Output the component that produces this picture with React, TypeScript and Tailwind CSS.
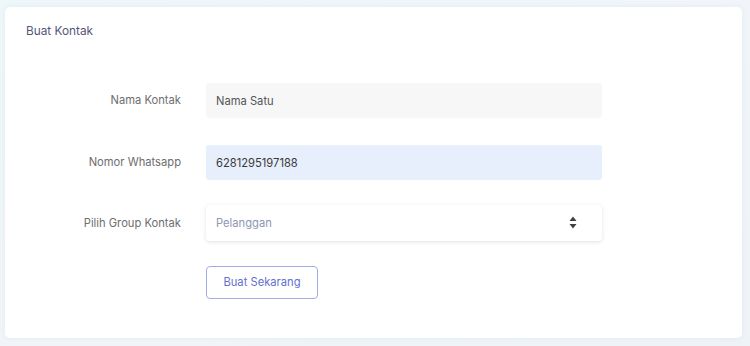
import { useState } from 'react';

const GROUPS = ['Pelanggan', 'Supplier', 'Keluarga'];

function SortIcon() {
  return (
    <svg width="8" height="13" viewBox="0 0 8 13" className="text-[#3f3f46]">
      <path d="M4 0.5 L7.5 5 L0.5 5 Z" fill="currentColor" />
      <path d="M4 12.5 L7.5 8 L0.5 8 Z" fill="currentColor" />
    </svg>
  );
}

export default function App() {
  const [nama, setNama] = useState('Nama Satu');
  const [wa, setWa] = useState('6281295197188');
  const [group, setGroup] = useState(GROUPS[0]);

  return (
    <div
      className="w-[750px] h-[346px] pt-[7px] pl-[5px] bg-gradient-to-br from-[#eef7fa] via-[#f1f5f9] to-[#eef3f8]"
      style={{ fontFamily: 'Inter, "Noto Sans", sans-serif' }}
    >
      <div className="w-[737px] h-[331px] bg-white rounded-[5px] pt-[16px] shadow-[0_0_4px_rgba(210,225,235,0.5)]">
        <p className="m-0 pl-[21px] text-[11.8px] leading-[16px] text-[#55547a]">Buat Kontak</p>

        <div className="mt-[44px] flex flex-col">
          <div className="flex items-center">
            <label className="w-[176px] text-right text-[11.2px] text-[#6e6e6e]">Nama Kontak</label>
            <input
              value={nama}
              onChange={e => setNama(e.target.value)}
              className="ml-[25px] w-[396px] h-[35px] px-[10px] rounded-[3px] bg-[#f7f7f7] text-[11.2px] text-[#555] outline-none"
            />
          </div>

          <div className="flex items-center mt-[27px]">
            <label className="w-[176px] text-right text-[11.2px] text-[#6e6e6e]">Nomor Whatsapp</label>
            <input
              value={wa}
              onChange={e => setWa(e.target.value)}
              className="ml-[25px] w-[396px] h-[35px] px-[10px] rounded-[3px] bg-[#e8effc] text-[11.2px] text-[#3a3a3a] outline-none"
            />
          </div>

          <div className="flex items-center mt-[25px]">
            <label className="w-[176px] text-right text-[11.2px] text-[#6e6e6e]">Pilih Group Kontak</label>
            <div className="relative ml-[25px] w-[396px] h-[36px]">
              <select
                value={group}
                onChange={e => setGroup(e.target.value)}
                className="appearance-none w-full h-full px-[10px] rounded-[4px] bg-white text-[11.2px] text-[#8e96b6] outline-none shadow-[0_1px_4px_rgba(0,0,0,0.12)]"
              >
                {GROUPS.map(g => (
                  <option key={g}>{g}</option>
                ))}
              </select>
              <span className="absolute right-[25px] top-[11px] pointer-events-none">
                <SortIcon />
              </span>
            </div>
          </div>

          <div className="flex mt-[25px]">
            <button className="ml-[201px] w-[112px] h-[33px] rounded-[4px] border border-[#a5abe6] bg-white text-[11.2px] text-[#6470cf] cursor-pointer">
              Buat Sekarang
            </button>
          </div>
        </div>
      </div>
    </div>
  );
}
